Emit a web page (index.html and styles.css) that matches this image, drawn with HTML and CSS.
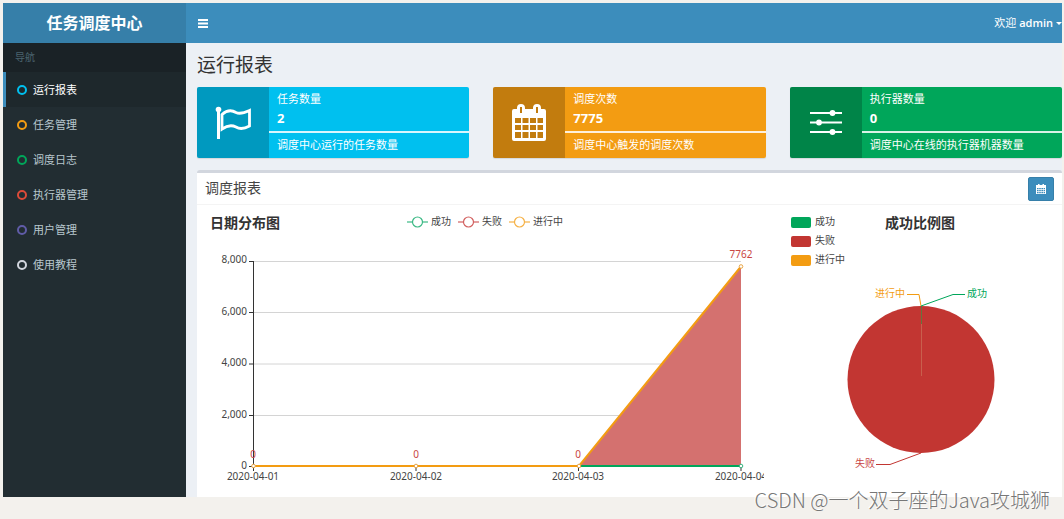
FILE: index.html
```html
<!DOCTYPE html>
<html lang="zh-CN">
<head>
<meta charset="utf-8">
<meta name="viewport" content="width=device-width, initial-scale=1">
<title>任务调度中心</title>
<link rel="stylesheet" href="styles.css">
</head>
<body>
<div class="app">
  <header class="topbar">
    <a class="logo" href="#">任务调度中心</a>
    <nav class="navbar">
      <button class="toggle" type="button" aria-label="切换导航">
        <svg width="10" height="9" viewBox="0 0 10 9"><path d="M0 1h10M0 4.500h10M0 8h10" stroke="#fff" stroke-width="2"/></svg>
      </button>
      <button class="user" type="button">欢迎 <b>admin</b><span class="caret"></span></button>
    </nav>
  </header>
  <div class="main">
    <aside class="sidebar">
      <div class="side-title">导航</div>
      <nav class="menu">
        <a class="item active" href="#"><span class="ring aqua"></span>运行报表</a>
        <a class="item" href="#"><span class="ring orange"></span>任务管理</a>
        <a class="item" href="#"><span class="ring green"></span>调度日志</a>
        <a class="item" href="#"><span class="ring red"></span>执行器管理</a>
        <a class="item" href="#"><span class="ring purple"></span>用户管理</a>
        <a class="item" href="#"><span class="ring light"></span>使用教程</a>
      </nav>
    </aside>
    <main class="content">
      <h1 class="title">运行报表</h1>
      <section class="cards">
        <article class="card card-aqua">
          <div class="card-icon">
            <svg width="36" height="34" viewBox="0 0 36 34" fill="none" stroke="#fff"><circle cx="3.500" cy="3.500" r="2.800" fill="#fff" stroke="none"/><path d="M3.500 3v30" stroke-width="3"/><path d="M7 8.500C12 4 17 4 21 6.500C25 8.500 29 7 34.500 4.500V20C29 23 25 23.500 21 21C17 19 12 19.500 7 23Z" stroke-width="2.800"/></svg>
          </div>
          <div class="card-body"><span>任务数量</span><b>2</b><p>调度中心运行的任务数量</p></div>
        </article>
        <article class="card card-orange">
          <div class="card-icon">
            <svg width="34" height="37" viewBox="0 0 34 37"><path fill="#fff" fill-rule="evenodd" d="M2 5H5V4Q5 0 9 0T13 4V5H21V4Q21 0 25 0T29 4V5H32Q34 5 34 7V35Q34 37 32 37H2Q0 37 0 35V7Q0 5 2 5ZM8 3V9H10V3ZM24 3V9H26V3ZM3 14V19H9V14ZM10.500 14V19H16.500V14ZM18 14V19H24V14ZM25.500 14V19H31V14ZM3 21V26H9V21ZM10.500 21V26H16.500V21ZM18 21V26H24V21ZM25.500 21V26H31V21ZM3 28V34H9V28ZM10.500 28V34H16.500V28ZM18 28V34H24V28ZM25.500 28V34H31V28Z"/></svg>
          </div>
          <div class="card-body"><span>调度次数</span><b>7775</b><p>调度中心触发的调度次数</p></div>
        </article>
        <article class="card card-green">
          <div class="card-icon">
            <svg width="32" height="26" viewBox="0 0 32 26"><path d="M0 3h32M0 12.500h32M0 22h32" stroke="#fff" stroke-width="2"/><g fill="#fff"><circle cx="22.500" cy="3" r="2.900"/><circle cx="9" cy="12.500" r="2.900"/><circle cx="22.500" cy="22" r="2.900"/></g></svg>
          </div>
          <div class="card-body"><span>执行器数量</span><b>0</b><p>调度中心在线的执行器机器数量</p></div>
        </article>
      </section>
      <section class="box">
        <header class="box-head">
          <h2>调度报表</h2>
          <button class="date" type="button" aria-label="选择日期">
            <svg width="10" height="10" viewBox="0 0 10 10"><path fill="#fff" fill-rule="evenodd" d="M0 1H2V0H3.500V1H6.500V0H8V1H10V10H0ZM1 4V5.300H2.600V4ZM3.200 4V5.300H4.800V4ZM5.400 4V5.300H7V4ZM7.600 4V5.300H9V4ZM1 6V7.200H2.600V6ZM3.200 6V7.200H4.800V6ZM5.400 6V7.200H7V6ZM7.600 6V7.200H9V6ZM1 8V9.200H2.600V8ZM3.200 8V9.200H4.800V8ZM5.400 8V9.200H7V8ZM7.600 8V9.200H9V8Z"/></svg>
          </button>
        </header>
        <div class="charts">
          <svg class="chart" viewBox="197 205 567 292" role="img" aria-label="日期分布图">
            <text class="chart-title" x="210" y="228">日期分布图</text>
            <g fill="#fff" stroke-width="1.200">
              <g stroke="#3cb985"><path d="M407 222h21"/><circle cx="417.500" cy="222" r="5"/></g>
              <g stroke="#d2605f"><path d="M458 222h21"/><circle cx="468.500" cy="222" r="5"/></g>
              <g stroke="#f6b145"><path d="M509 222h21"/><circle cx="519.500" cy="222" r="5"/></g>
            </g>
            <g class="label"><text x="431" y="225">成功</text><text x="482" y="225">失败</text><text x="533" y="225">进行中</text></g>
            <path d="M253 261.500H741M253 312.500H741M253 364H741M253 415.500H741" stroke="#d4d4d4"/>
            <path d="M579 466L741 266.500V466Z" fill="#d4716f"/>
            <path d="M253.500 261V471M249 261.500h4M249 312.500h4M249 364h4M249 415.500h4M249 466.500h4M416 467v4M578.500 467v4M741 467v4" stroke="#333" fill="none"/>
            <path d="M579 466H741" stroke="#00a65a" stroke-width="2"/>
            <path d="M253 466H579L741 266.500" fill="none" stroke="#f39c12" stroke-width="2"/>
            <g fill="#fff" stroke="#e9a545"><circle cx="253.500" cy="466" r="1.800"/><circle cx="416" cy="466" r="1.800"/><circle cx="579" cy="466" r="1.800"/><circle cx="741" cy="266.500" r="1.800"/><circle cx="741" cy="466" r="1.800" stroke="#35b57f"/></g>
            <g class="label end"><text x="247" y="263">8,000</text><text x="247" y="315">6,000</text><text x="247" y="366">4,000</text><text x="247" y="418">2,000</text><text x="247" y="469">0</text></g>
            <g class="label mid"><text x="253" y="480">2020-04-01</text><text x="416" y="480">2020-04-02</text><text x="578" y="480">2020-04-03</text><text x="741" y="480">2020-04-04</text></g>
            <g class="label mid fail"><text x="253" y="458">0</text><text x="416" y="458">0</text><text x="578" y="458">0</text><text x="741" y="258">7762</text></g>
          </svg>
          <svg class="chart" viewBox="764 205 298 292" role="img" aria-label="成功比例图">
            <rect x="791" y="217" width="20" height="11" rx="2" fill="#00a65a"/>
            <rect x="791" y="236" width="20" height="11" rx="2" fill="#c23632"/>
            <rect x="791" y="255" width="20" height="11" rx="2" fill="#f39c12"/>
            <g class="label"><text x="815" y="225">成功</text><text x="815" y="244">失败</text><text x="815" y="263">进行中</text></g>
            <text class="chart-title" x="885" y="228">成功比例图</text>
            <circle cx="921" cy="379.500" r="73.500" fill="#c23632"/>
            <path d="M921.500 306V324" stroke="#66733d"/>
            <path d="M921.500 324V376" stroke="#c95f4d"/>
            <g fill="none"><path d="M907 294.500H919L921 306" stroke="#f39c12"/><path d="M965 294.500H953L921 306" stroke="#00a65a"/><path d="M876 464.500H890L921 453" stroke="#c23632"/></g>
            <g class="label"><text class="wait" x="875" y="297">进行中</text><text class="ok" x="967" y="297">成功</text><text class="fail" x="855" y="467">失败</text></g>
          </svg>
        </div>
      </section>
    </main>
  </div>
</div>
<div class="watermark">CSDN @一个双子座的Java攻城狮</div>
</body>
</html>
```
FILE: styles.css
```css
* { box-sizing: border-box; }
body {
  margin: 0;
  padding: 3px 2px 22px 3px;
  background: #f3f1ed;
  color: #333;
  font: 11px/16px "Noto Sans", "Noto Sans CJK SC", sans-serif;
}
h1, h2, p { margin: 0; font-weight: 400; }
a { color: inherit; text-decoration: none; }
button { border: 0; padding: 0; background: none; color: #fff; font: inherit; cursor: pointer; }
svg { display: block; }

.topbar { display: flex; height: 40px; color: #fff; }
.logo {
  width: 183px;
  background: #367fa9;
  font-size: 16px;
  font-weight: 700;
  line-height: 40px;
  text-align: center;
}
.navbar { flex: 1; display: flex; justify-content: space-between; align-items: center; background: #3c8dbc; }
.toggle { padding: 12px; }
.user { display: flex; align-items: center; gap: 3px; }
.user b { font-family: "Open Sans", sans-serif; font-weight: 600; }
.caret { border: 3px solid transparent; border-top-color: #fff; border-bottom: 0; }

.main { display: flex; }
.sidebar { width: 183px; background: #222d32; color: #b8c7ce; }
.side-title { height: 29px; padding-left: 12px; background: #1a2226; color: #4b646f; font-size: 10px; line-height: 29px; }
.item { display: flex; align-items: center; gap: 6px; height: 35px; padding-left: 11px; border-left: 3px solid transparent; }
.active { background: #1e282c; border-color: #3c8dbc; color: #fff; }
.ring { width: 10px; height: 10px; border: 2px solid; border-radius: 50%; }
.aqua { color: #00c0ef; }
.orange { color: #f39c12; }
.green { color: #00a65a; }
.red { color: #dd4b39; }
.purple { color: #605ca8; }
.light { color: #d2d6de; }

.content { flex: 1; min-width: 0; padding-left: 11px; background: #ecf0f5; }
.title { height: 44px; font-size: 19px; line-height: 44px; }
.cards { display: grid; grid-template-columns: repeat(3, 1fr); gap: 24px; margin-bottom: 12px; }
.card { display: grid; grid-template-columns: 72px 1fr; border-radius: 2px; color: #fff; overflow: hidden; box-shadow: 0 1px 1px rgba(0, 0, 0, .1); }
.card-icon { display: grid; place-items: center; background: rgba(0, 0, 0, .2); }
.card-aqua { background: #00c0ef; }
.card-orange { background: #f39c12; }
.card-green { background: #00a65a; }
.card-body { padding-top: 4px; }
.card-body span, .card-body b { display: block; padding-left: 8px; }
.card-body b { height: 24px; font-size: 13px; line-height: 22px; }
.card-body p { padding: 4px 8px 5px; border-top: 2px solid rgba(255, 255, 255, .85); }

.box { border-top: 3px solid #d2d6de; border-radius: 3px 3px 0 0; background: #fff; }
.box-head { display: flex; justify-content: space-between; align-items: center; height: 32px; padding: 0 8px; border-bottom: 1px solid #f4f4f4; }
.box-head h2 { height: 22px; font-size: 14px; line-height: 20px; color: #444; }
.date { display: grid; place-items: center; width: 26px; height: 24px; border: 1px solid #367fa9; border-radius: 2px; background: #3c8dbc; }
.charts { display: grid; grid-template-columns: 567fr 298fr; }
.chart { width: 100%; }
.chart-title { font-size: 14px; font-weight: 700; fill: #333; }
.label { font-size: 10px; fill: #444; }
.end { text-anchor: end; }
.mid { text-anchor: middle; }
.fail { fill: #c94643; }
.wait { fill: #f39c12; }
.ok { fill: #00a65a; }

.watermark {
  position: absolute;
  right: 14px;
  bottom: 7px;
  color: #777;
  font: 300 20px/24px "Noto Sans CJK SC", sans-serif;
  text-shadow: -1px -1px 0 #fff;
}
```
